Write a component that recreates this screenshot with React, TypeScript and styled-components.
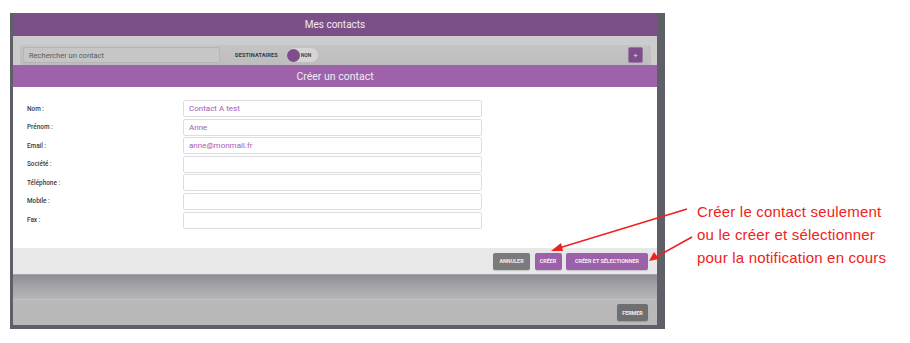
import styled, { createGlobalStyle } from "styled-components";

const GlobalStyle = createGlobalStyle`
	html, body {
		margin: 0;
		padding: 0;
		background: #ffffff;
	}
	body {
		width: 910px;
		height: 343px;
		overflow: hidden;
		font-family: Roboto, "Liberation Sans", sans-serif;
	}
`;

const Page = styled.div`
	position: relative;
	display: flex;
	align-items: flex-start;
	padding: 13px 0 0 10px;
	width: 910px;
	height: 343px;
	box-sizing: border-box;
`;

const Shot = styled.div`
	display: flex;
	width: 655px;
	height: 316px;
	padding: 0 8px 4px 3px;
	box-sizing: border-box;
	background: #5f6067;
`;

const Modal = styled.div`
	flex: 1;
	display: flex;
	flex-direction: column;
	background: #c9c9c9;
`;

const Header = styled.div<{ $tone: string; $h: number }>`
	height: ${(p) => p.$h}px;
	flex: none;
	display: flex;
	align-items: center;
	justify-content: center;
	background: ${(p) => p.$tone};
	color: #f1eaf3;
	font-size: ${(p) => (p.$h > 22 ? 10 : 10.5)}px;
`;

const Toolbar = styled.div`
	height: 29px;
	flex: none;
	padding: 9px 6px 0 7px;
	box-sizing: border-box;
	background: #cccccc;
`;

const ToolbarInner = styled.div`
	height: 100%;
	display: flex;
	align-items: center;
	padding: 0 8px 0 3px;
	background: linear-gradient(#c4c4c4, #bdbdbd);
`;

const Search = styled.div`
	width: 197px;
	height: 16px;
	display: flex;
	align-items: center;
	padding-left: 5px;
	box-sizing: border-box;
	border: 1px solid #b5b5b5;
	border-radius: 2px;
	background: #c6c6c6;
	color: #5b5b5b;
	font-size: 7.5px;
`;

const SmallCaps = styled.span`
	margin-left: 15px;
	font-size: 5.6px;
	font-weight: 700;
	color: #3a3a3a;
	letter-spacing: 0.1px;
`;

const Toggle = styled.div`
	margin-left: 9px;
	width: 31px;
	height: 14px;
	display: flex;
	align-items: center;
	border-radius: 7px;
	background: #d6d6d6;
	font-size: 5px;
	font-weight: 700;
	color: #444;
`;

const Knob = styled.span`
	width: 13px;
	height: 13px;
	border-radius: 50%;
	background: #7d4e8b;
	margin-right: 1px;
`;

const Plus = styled.div`
	margin-left: auto;
	width: 15px;
	height: 16px;
	display: flex;
	align-items: center;
	justify-content: center;
	box-sizing: border-box;
	border: 1px solid #9a78a4;
	border-radius: 2px;
	background: #7c4f89;
	color: #e6dbe9;
	font-size: 8px;
`;

const Dialog = styled.div`
	flex: none;
	display: flex;
	flex-direction: column;
`;

const Body = styled.div`
	height: 161px;
	padding: 13px 0 0 14px;
	box-sizing: border-box;
	background: #ffffff;
	display: flex;
	flex-direction: column;
	gap: 1.6px;
`;

const Row = styled.div`
	display: flex;
	align-items: center;
	height: 17px;
`;

const Label = styled.div`
	width: 156px;
	font-size: 6.4px;
	font-weight: 500;
	color: #3a3a3a;
`;

const Field = styled.div`
	width: 299px;
	height: 17px;
	display: flex;
	align-items: center;
	padding-left: 5px;
	box-sizing: border-box;
	border: 1px solid #dedee2;
	border-radius: 2px;
	color: #a25cb1;
	font-size: 8px;
`;

const DialogFooter = styled.div`
	height: 26px;
	display: flex;
	align-items: center;
	justify-content: flex-end;
	gap: 4.5px;
	padding-right: 9px;
	background: #e8e8e8;
	border-bottom: 1px solid #a3a3a8;
`;

const Btn = styled.div<{ $tone: string; $w: number }>`
	width: ${(p) => p.$w}px;
	height: 17px;
	display: flex;
	align-items: center;
	justify-content: center;
	border-radius: 2px;
	background: ${(p) => p.$tone};
	color: #f3eef4;
	font-size: 5.4px;
	font-weight: 700;
	box-shadow: 0 1px 1px rgba(0, 0, 0, 0.15);
`;

const Shade = styled.div`
	height: 24px;
	flex: none;
	background: linear-gradient(#8e8f96, #a9a9ad 60%, #b5b5b8);
`;

const Footer = styled.div`
	flex: 1;
	display: flex;
	align-items: center;
	justify-content: flex-end;
	padding-right: 9px;
	background: #b9b9b9;
	border-top: 1px solid #c2c2c2;
`;

const Note = styled.div`
	margin: 187px 0 0 32px;
	font-family: "Liberation Sans", Arial, sans-serif;
	font-size: 15px;
	letter-spacing: 0.2px;
	line-height: 23px;
	color: #f02222;
	white-space: nowrap;
`;

const Arrows = styled.svg`
	position: absolute;
	left: 0;
	top: 0;
	pointer-events: none;
`;

const fields: [string, string][] = [
	["Nom :", "Contact A test"],
	["Prénom :", "Anne"],
	["Email :", "anne@monmail.fr"],
	["Société :", ""],
	["Téléphone :", ""],
	["Mobile :", ""],
	["Fax :", ""],
];

export default function App() {
	return (
		<>
			<GlobalStyle />
			<Page>
				<Shot>
					<Modal>
						<Header $tone="#7b5088" $h={23}>
							Mes contacts
						</Header>
						<Toolbar>
							<ToolbarInner>
								<Search>Rechercher un contact</Search>
								<SmallCaps>DESTINATAIRES</SmallCaps>
								<Toggle>
									<Knob />
									NON
								</Toggle>
								<Plus>+</Plus>
							</ToolbarInner>
						</Toolbar>
						<Dialog>
							<Header $tone="#9e62aa" $h={22}>
								Créer un contact
							</Header>
							<Body>
								{fields.map(([label, value]) => (
									<Row key={label}>
										<Label>{label}</Label>
										<Field>{value}</Field>
									</Row>
								))}
							</Body>
							<DialogFooter>
								<Btn $tone="#7b7b7b" $w={37}>
									ANNULER
								</Btn>
								<Btn $tone="#9d60aa" $w={27}>
									CRÉER
								</Btn>
								<Btn $tone="#9d60aa" $w={82}>
									CRÉER ET SÉLECTIONNER
								</Btn>
							</DialogFooter>
						</Dialog>
						<Shade />
						<Footer>
							<Btn $tone="#6f6f6f" $w={31}>
								FERMER
							</Btn>
						</Footer>
					</Modal>
				</Shot>
				<Note>
					Créer le contact seulement
					<br />
					ou le créer et sélectionner
					<br />
					pour la notification en cours
				</Note>
				<Arrows width="910" height="343" viewBox="0 0 910 343">
					<g stroke="#ee2222" strokeWidth="1.6" fill="#ee2222">
						<line x1="687" y1="209" x2="559" y2="248" />
						<polygon points="551,251 561,243 563,251" stroke="none" />
						<line x1="692" y1="237" x2="656" y2="257" />
						<polygon points="649,261 654,252 659,259" stroke="none" />
					</g>
				</Arrows>
			</Page>
		</>
	);
}
